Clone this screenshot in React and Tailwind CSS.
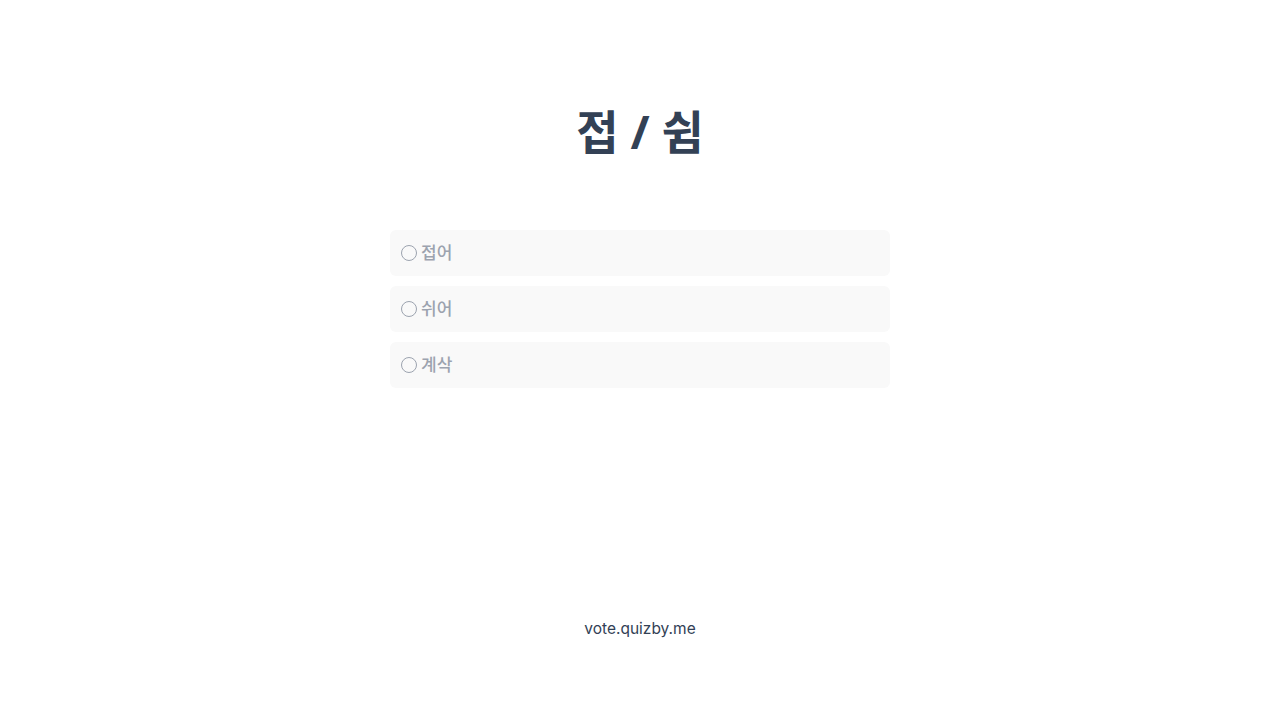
export default function App() {
  const options = ['접어', '쉬어', '계삭']
  return (
    <div
      className="flex min-h-[720px] flex-col items-center bg-white"
      style={{ fontFamily: '"Noto Sans", "Noto Sans CJK KR", sans-serif' }}
    >
      <h1 className="mt-[99px] text-[46px] font-bold leading-[64px] text-[#334155]">접 / 쉼</h1>
      <div className="mt-[67px] flex w-[500px] flex-col gap-[10px]">
        {options.map((o) => (
          <div key={o} className="flex h-[46px] items-center gap-[4px] rounded-md bg-[#f9f9f9] px-[11px]">
            <span className="h-[16px] w-[16px] rounded-full border-[1.5px] border-[#9ca3af]" />
            <span className="text-[17px] font-medium text-[#9ca3af]">{o}</span>
          </div>
        ))}
      </div>
      <div className="mt-[229px] font-['Inter',sans-serif] text-[15.5px] text-[#334155]">vote.quizby.me</div>
    </div>
  )
}
